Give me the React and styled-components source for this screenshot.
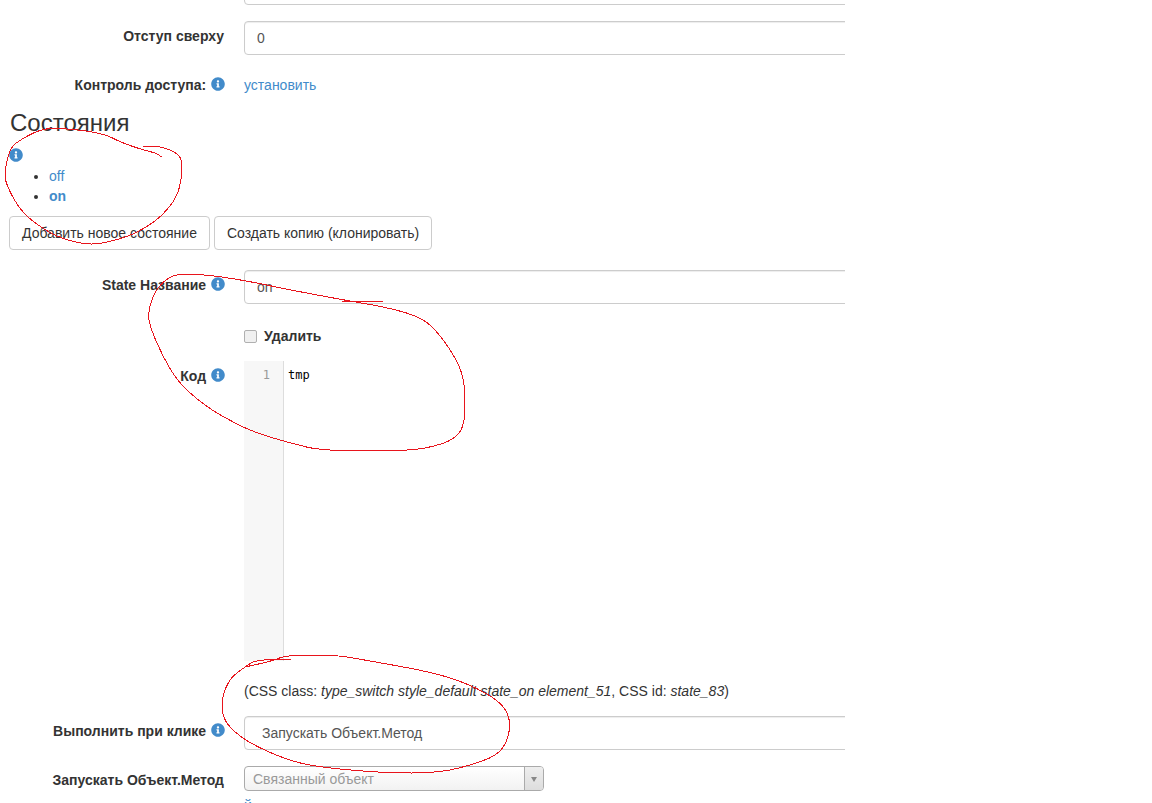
import React from 'react'
import styled, { createGlobalStyle } from 'styled-components'
import { FaInfoCircle } from 'react-icons/fa'

const GlobalStyle = createGlobalStyle`
  html, body { margin: 0; padding: 0; background: #fff; overflow: hidden; }
  body { font-family: "Liberation Sans", Arial, sans-serif; font-size: 14px; line-height: 20px; color: #333; }
  #root { height: 803px; overflow: hidden; position: relative; }
`

// hand drawn circles on top of the form, points are taken from the screenshot
const toPath = (pts) => {
  let d = `M${pts[0][0]} ${pts[0][1]}`
  for (let i = 1; i < pts.length - 1; i++) {
    const mx = (pts[i][0] + pts[i + 1][0]) / 2
    const my = (pts[i][1] + pts[i + 1][1]) / 2
    d += ` Q${pts[i][0]} ${pts[i][1]} ${mx} ${my}`
  }
  const last = pts[pts.length - 1]
  return `${d} L${last[0]} ${last[1]}`
}

const scribbles = [
  [[162,157],[157,153],[143,150],[120,142],[107,135],[83,130],[50,128],[37,131],[20,140],[10,148],[5,170],[5,182],[18,207],[33,222],[57,237],[83,244],[100,244],[127,237],[147,227],[163,215],[177,197],[182,177],[182,160],[177,153],[160,146],[143,146]],
  [[383,301],[342,301]],
  [[350,301],[300,292],[243,280],[200,274],[172,274],[155,290],[148,312],[150,327],[163,357],[178,382],[200,402],[223,417],[253,432],[290,443],[323,451],[410,451],[440,445],[457,437],[465,423],[465,383],[457,360],[440,335],[423,318],[390,308],[350,301]],
  [[291,659],[257,659],[245,667],[230,678],[222,697],[222,715],[230,728],[249,743],[287,760],[318,767],[383,773],[440,773],[478,763],[501,753],[510,733],[509,713],[494,697],[459,680],[421,670],[364,660],[337,655],[287,655],[272,661],[245,667]],
]

const App = () => {
  return (
    <>
      <GlobalStyle />
      <Page>
        <FormRow>
          <Label />
          <Field><TextInput readOnly value="" /></Field>
        </FormRow>
        <FormRow>
          <Label>Отступ сверху</Label>
          <Field><TextInput readOnly value="0" /></Field>
        </FormRow>
        <StaticRow>
          <Label>Контроль доступа: <Info /></Label>
          <Field><Link href="#">установить</Link></Field>
        </StaticRow>

        <States>
          <Heading>Состояния</Heading>
          <HelpLine><Info /></HelpLine>
          <StateList>
            <li><Link href="#">off</Link></li>
            <li><Link href="#" $active>on</Link></li>
          </StateList>
          <Buttons>
            <Button>Добавить новое состояние</Button>
            <Button>Создать копию (клонировать)</Button>
          </Buttons>
        </States>

        <FormRow>
          <Label>State Название <Info /></Label>
          <Field><TextInput readOnly value="on" /></Field>
        </FormRow>
        <CheckRow>
          <Label />
          <Field>
            <CheckLabel><CheckBox />Удалить</CheckLabel>
          </Field>
        </CheckRow>
        <CodeRow>
          <Label>Код <Info /></Label>
          <Field>
            <Editor>
              <Gutter>1</Gutter>
              <CodeText>tmp</CodeText>
            </Editor>
            <CssNote>(CSS class: <em>type_switch style_default state_on element_51</em>, CSS id: <em>state_83</em>)</CssNote>
          </Field>
        </CodeRow>
        <FormRow>
          <Label>Выполнить при клике <Info /></Label>
          <Field><TextInput $wide readOnly value="Запускать Объект.Метод" /></Field>
        </FormRow>
        <SelectRow>
          <Label>Запускать Объект.Метод</Label>
          <Field>
            <FakeSelect>
              <SelectText>Связанный объект</SelectText>
              <SelectArrow><i /></SelectArrow>
            </FakeSelect>
            <CutLink href="#">й</CutLink>
          </Field>
        </SelectRow>
      </Page>
      <Scribble viewBox="0 0 1152 803">
        {scribbles.map((pts, i) => <path key={i} d={toPath(pts)} />)}
      </Scribble>
    </>
  )
}

export default App

const Page = styled.div`
  width: 845px;
  margin-top: -29px;
  overflow: hidden;
`

const FormRow = styled.div`
  display: grid;
  grid-template-columns: 224px 1fr;
  column-gap: 20px;
  margin-bottom: 16px;
`

const StaticRow = styled(FormRow)`
  padding-top: 4px;
  margin-bottom: 15px;
`

const CheckRow = styled(FormRow)`
  margin: -16px 0 0;
  padding-top: 22px;
  height: 51px;
  box-sizing: border-box;
`

const CodeRow = styled(FormRow)`
  margin-top: 6px;
  margin-bottom: 15px;
`

const SelectRow = styled(FormRow)`
  margin-bottom: 0;
`

const Label = styled.div`
  font-weight: bold;
  text-align: right;
  padding-top: 5px;
  white-space: nowrap;
  ${StaticRow} & { padding-top: 0; }
  ${SelectRow} & { padding-top: 4px; }
`

const Field = styled.div`
  min-width: 0;
`

const TextInput = styled.input`
  display: block;
  width: calc(100% + 10px);
  height: 34px;
  box-sizing: border-box;
  padding: 6px ${({ $wide }) => ($wide ? '17px' : '12px')};
  font: 14px/20px "Liberation Sans", Arial, sans-serif;
  color: #555;
  background: #fff;
  border: 1px solid #ccc;
  border-radius: 4px;
  box-shadow: inset 0 1px 1px rgba(0, 0, 0, 0.075);
  outline: none;
`

const Link = styled.a`
  color: #428bca;
  text-decoration: none;
  font-weight: ${({ $active }) => ($active ? 'bold' : 'normal')};
`

const Info = styled(FaInfoCircle)`
  width: 14px;
  height: 14px;
  margin: 0 -1px 0 1px;
  color: #428bca;
  vertical-align: -1px;
`

const States = styled.div`
  padding-left: 9px;
  margin-bottom: 20px;
`

const Heading = styled.h3`
  margin: 0 0 0 1px;
  font-size: 24px;
  font-weight: 500;
  line-height: 26px;
  color: #333;
`

const HelpLine = styled.div`
  height: 20px;
  margin-top: 10px;
  line-height: 20px;
  svg { margin: 0; vertical-align: -1px; }
`

const StateList = styled.ul`
  margin: 0 0 10px;
  padding-left: 40px;
`

const Buttons = styled.div`
  display: flex;
  gap: 4px;
`

const Button = styled.button`
  height: 34px;
  padding: 6px 12px;
  font: 14px/20px "Liberation Sans", Arial, sans-serif;
  color: #333;
  background: #fff;
  border: 1px solid #ccc;
  border-radius: 4px;
`

const CheckLabel = styled.label`
  display: flex;
  align-items: center;
  gap: 7px;
  font-weight: bold;
`

const CheckBox = styled.span`
  width: 13px;
  height: 13px;
  box-sizing: border-box;
  background: #f0f0f0;
  border: 1px solid #b0b0b0;
  border-radius: 2px;
`

const Editor = styled.div`
  display: flex;
  height: 300px;
  font: 12px/18px "DejaVu Sans Mono", monospace;
`

const Gutter = styled.div`
  width: 40px;
  padding: 5px 13px 0 0;
  box-sizing: border-box;
  text-align: right;
  color: #999;
  background: #f7f7f7;
  border-right: 1px solid #ddd;
`

const CodeText = styled.div`
  padding: 5px 0 0 4px;
  color: #000;
`

const CssNote = styled.div`
  margin-top: 20px;
`

const FakeSelect = styled.div`
  display: flex;
  width: 300px;
  height: 25px;
  box-sizing: border-box;
  border: 1px solid #aaa;
  border-radius: 4px;
  background: linear-gradient(#fff, #f2f2f2);
  overflow: hidden;
`

const SelectText = styled.div`
  flex: 1;
  padding-left: 8px;
  line-height: 25px;
  color: #999;
`

const SelectArrow = styled.div`
  display: flex;
  align-items: center;
  justify-content: center;
  width: 18px;
  border-left: 1px solid #aaa;
  background: linear-gradient(#eee, #ddd);
  i {
    margin-top: 2px;
    border-left: 3px solid transparent;
    border-right: 3px solid transparent;
    border-top: 5px solid #888;
  }
`

const CutLink = styled(Link)`
  display: block;
  margin-top: 4px;
`

const Scribble = styled.svg`
  position: absolute;
  top: 0;
  left: 0;
  width: 1152px;
  height: 803px;
  pointer-events: none;
  shape-rendering: crispEdges;
  path {
    fill: none;
    stroke: #e8141c;
    stroke-width: 1;
  }
`
